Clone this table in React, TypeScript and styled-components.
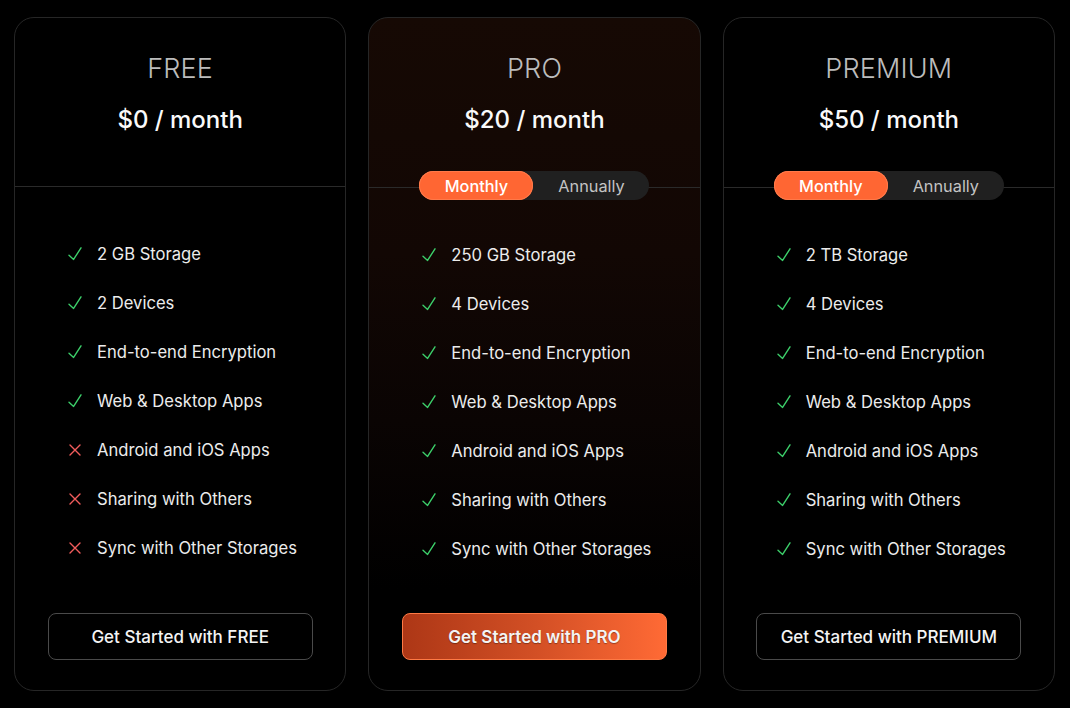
import React from "react";
import styled, { createGlobalStyle } from "styled-components";

const Global = createGlobalStyle`
  html, body { margin: 0; padding: 0; background: #000; }
  body { font-family: Inter, "Noto Sans", sans-serif; -webkit-font-smoothing: antialiased; }
  * { box-sizing: border-box; }
`;

const Page = styled.div`
  width: 1070px;
  height: 708px;
  background: #000;
  display: grid;
  grid-template-columns: repeat(3, 1fr);
  gap: 22px;
  padding: 17px 15px 0 14px;
`;

const Card = styled.div<{ $highlight?: boolean }>`
  height: 674px;
  border: 1px solid #262626;
  border-radius: 20px;
  display: flex;
  flex-direction: column;
  overflow: hidden;
  background: ${(p) =>
    p.$highlight
      ? "linear-gradient(180deg, #160904 0%, #120704 35%, #0a0403 60%, #000 85%)"
      : "#000"};
`;

const Header = styled.div<{ $withToggle?: boolean }>`
  position: relative;
  height: ${(p) => (p.$withToggle ? 170 : 169)}px;
  border-bottom: 1px solid #2a2a2a;
  display: flex;
  flex-direction: column;
  align-items: center;
  padding-top: 33px;
`;

const Title = styled.div`
  font-size: 27px;
  line-height: 36px;
  font-weight: 300;
  color: #bcbcbc;
  letter-spacing: 0.2px;
`;

const Price = styled.div`
  margin-top: 18px;
  font-size: 24px;
  line-height: 30px;
  font-weight: 500;
  color: #fafafa;
`;

const Toggle = styled.div`
  position: absolute;
  left: 50%;
  bottom: -13px;
  transform: translateX(-50%);
  width: 230px;
  height: 29px;
  border-radius: 999px;
  background: #202020;
  display: grid;
  grid-template-columns: 114px 1fr;
`;

const ToggleOption = styled.div<{ $active?: boolean }>`
  display: flex;
  align-items: center;
  justify-content: center;
  border-radius: 999px;
  font-size: 16.3px;
  font-weight: ${(p) => (p.$active ? 500 : 400)};
  color: ${(p) => (p.$active ? "#fff" : "#c4c4c4")};
  background: ${(p) => (p.$active ? "#ff6633" : "transparent")};
  box-shadow: ${(p) => (p.$active ? "inset 0 0 0 1px #ff7a4a" : "none")};
`;

const Features = styled.ul`
  list-style: none;
  margin: 0;
  padding: 55px 0 0 52px;
  display: flex;
  flex-direction: column;
  gap: 25px;
  flex: 1;
`;

const Feature = styled.li`
  display: flex;
  align-items: center;
  gap: 14px;
  height: 24px;
  font-size: 16.6px;
  color: #ececec;
`;

const IconBox = styled.span`
  width: 16px;
  height: 16px;
  display: flex;
  align-items: center;
  justify-content: center;
  flex-shrink: 0;
`;

const Footer = styled.div`
  display: flex;
  justify-content: center;
  padding-bottom: 30px;
`;

const CTA = styled.button<{ $primary?: boolean }>`
  width: 265px;
  height: 47px;
  border-radius: 8px;
  font-family: Inter, "Noto Sans", sans-serif;
  font-size: 17px;
  font-weight: ${(p) => (p.$primary ? 600 : 500)};
  color: #f4f4f4;
  cursor: pointer;
  border: 1px solid ${(p) => (p.$primary ? "#ff7a45" : "#4a4a4a")};
  background: ${(p) =>
    p.$primary ? "linear-gradient(90deg, #ad3716 0%, #d24f25 50%, #ff6a35 100%)" : "#000"};
  text-shadow: ${(p) => (p.$primary ? "0 1px 1px rgba(0,0,0,0.35)" : "none")};
`;

const Check = () => (
  <svg width="16" height="16" viewBox="0 0 16 16" fill="none">
    <path d="M2 9.2 L6.6 13.4 L14 1.8" stroke="#3ccf6a" strokeWidth="1.4" strokeLinecap="round" strokeLinejoin="round" />
  </svg>
);

const Cross = () => (
  <svg width="16" height="16" viewBox="0 0 16 16" fill="none">
    <path d="M3 3 L13 13 M13 3 L3 13" stroke="#f25c5c" strokeWidth="1.4" strokeLinecap="round" />
  </svg>
);

type Plan = {
  name: string;
  price: string;
  toggle: boolean;
  highlight?: boolean;
  features: [string, boolean][];
};

const common = ["End-to-end Encryption", "Web & Desktop Apps", "Android and iOS Apps", "Sharing with Others", "Sync with Other Storages"];

const plans: Plan[] = [
  {
    name: "FREE",
    price: "$0 / month",
    toggle: false,
    features: [
      ["2 GB Storage", true],
      ["2 Devices", true],
      [common[0], true],
      [common[1], true],
      [common[2], false],
      [common[3], false],
      [common[4], false],
    ],
  },
  {
    name: "PRO",
    price: "$20 / month",
    toggle: true,
    highlight: true,
    features: [["250 GB Storage", true], ["4 Devices", true], ...common.map((c) => [c, true] as [string, boolean])],
  },
  {
    name: "PREMIUM",
    price: "$50 / month",
    toggle: true,
    features: [["2 TB Storage", true], ["4 Devices", true], ...common.map((c) => [c, true] as [string, boolean])],
  },
];

export default function App() {
  return (
    <>
      <Global />
      <Page>
        {plans.map((p) => (
          <Card key={p.name} $highlight={p.highlight}>
            <Header $withToggle={p.toggle}>
              <Title>{p.name}</Title>
              <Price>{p.price}</Price>
              {p.toggle && (
                <Toggle>
                  <ToggleOption $active>Monthly</ToggleOption>
                  <ToggleOption>Annually</ToggleOption>
                </Toggle>
              )}
            </Header>
            <Features>
              {p.features.map(([f, ok]) => (
                <Feature key={f}>
                  <IconBox>{ok ? <Check /> : <Cross />}</IconBox>
                  {f}
                </Feature>
              ))}
            </Features>
            <Footer>
              <CTA $primary={p.highlight}>Get Started with {p.name}</CTA>
            </Footer>
          </Card>
        ))}
      </Page>
    </>
  );
}
